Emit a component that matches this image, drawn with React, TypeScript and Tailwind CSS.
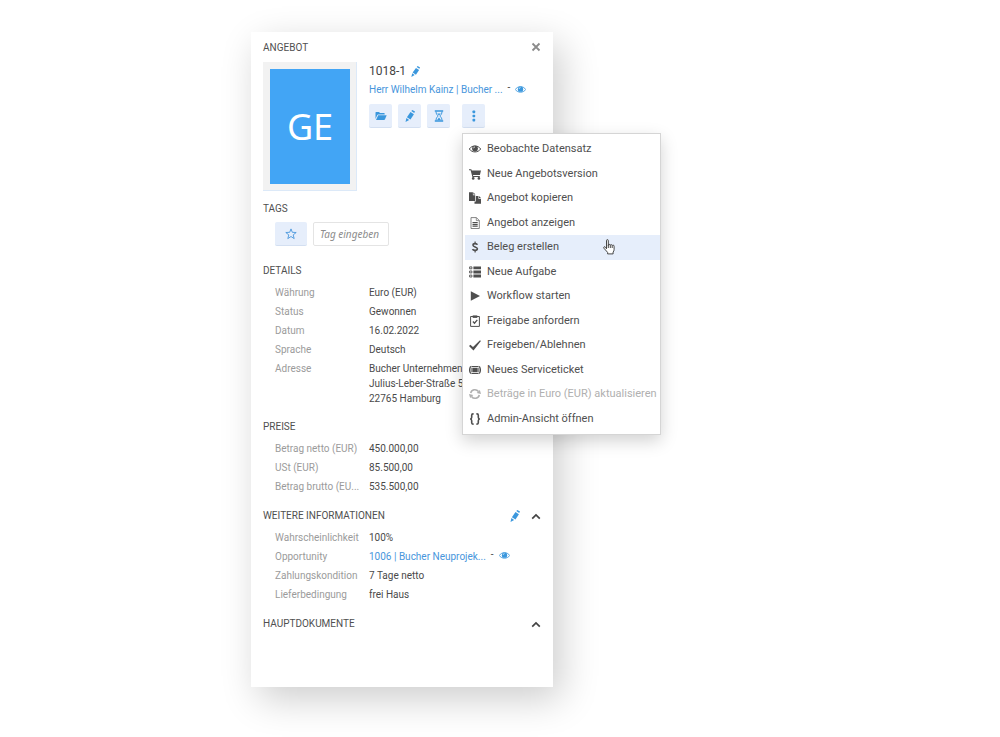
import type { ReactNode } from 'react';

type IconProps = { className?: string };

function Pencil({ className = 'h-3 w-3' }: IconProps) {
  return (
    <svg viewBox="0 0 12 12" className={className} fill="currentColor" aria-hidden="true">
      <path d="M7.300 1.100 8.300 0l2.700 1.600-.8 1.500z" />
      <path d="M6.500 2.100 9.900 4.300 6.500 9.500 2.900 7.200z" />
      <path d="M2.400 8 5.100 9.900 1.500 11.900z" />
    </svg>
  );
}

function Eye({ className = 'h-3 w-3' }: IconProps) {
  return (
    <svg viewBox="0 0 12 12" className={className} aria-hidden="true">
      <path d="M.3 6C3 1.900 9 1.900 11.700 6 9 9.900 3 9.900.3 6z" fill="none" stroke="currentColor" strokeWidth="1" />
      <circle cx="6" cy="5.600" r="2.900" fill="currentColor" />
      <path d="M4.500 5.300A1.500 1.500 0 0 1 6 3.900" fill="none" stroke="#fff" strokeWidth=".7" />
    </svg>
  );
}

function Folder() {
  return (
    <svg viewBox="0 0 12 12" className="h-3 w-3" fill="currentColor" aria-hidden="true">
      <path d="M.5 9V2.600q0-.6.600-.6H4l1 1.100h4q.7 0 .7.700v.8H3.200q-.7 0-1 .6z" />
      <path d="M3.200 5.300h8.500L10 9.300q-.3.700-1 .7H1z" />
    </svg>
  );
}

function Hourglass() {
  return (
    <svg viewBox="0 0 12 12" className="h-3 w-3" fill="none" stroke="currentColor" aria-hidden="true">
      <path d="M1.800 1h8.400M1.800 11h8.400" strokeWidth="1.400" />
      <path d="M3 1.500c0 2.500 1.200 3.500 2.200 4.500-1 1-2.200 2-2.200 4.500M9 1.500c0 2.500-1.200 3.500-2.200 4.500 1 1 2.200 2 2.200 4.500" strokeWidth="1" />
      <path d="M4.200 3.500h3.600L6 5.500zM3.900 10.300 6 7.500l2.100 2.800z" fill="currentColor" stroke="none" />
    </svg>
  );
}

function Dots() {
  return (
    <svg viewBox="0 0 12 12" className="h-3 w-3" fill="currentColor" aria-hidden="true">
      <rect x="4.500" y=".6" width="2.700" height="2.600" rx=".7" />
      <rect x="4.500" y="4.700" width="2.700" height="2.600" rx=".7" />
      <rect x="4.500" y="8.800" width="2.700" height="2.600" rx=".7" />
    </svg>
  );
}

function Star() {
  return (
    <svg viewBox="0 0 12 12" className="h-3 w-3" fill="none" stroke="currentColor" strokeWidth=".9" aria-hidden="true">
      <path d="M6 .9l1.300 3.400 3.900.2-3 2.400 1 3.700L6 8.500l-3.200 2.100 1-3.700-3-2.400 3.900-.2z" />
    </svg>
  );
}

function Close() {
  return (
    <svg viewBox="0 0 10 10" className="h-2.5 w-2.5" stroke="currentColor" strokeWidth="1.800" aria-hidden="true">
      <path d="M1.500 1.500l7 7M8.500 1.500l-7 7" />
    </svg>
  );
}

function ChevronUp() {
  return (
    <svg viewBox="0 0 10 10" className="h-2.5 w-2.5" fill="none" stroke="currentColor" strokeWidth="1.700" aria-hidden="true">
      <path d="M1.200 7.700 5 3.900l3.800 3.800" />
    </svg>
  );
}

function MenuSvg({ children }: { children: ReactNode }) {
  return (
    <svg viewBox="0 0 12 12" className="h-3 w-3 shrink-0" fill="currentColor" aria-hidden="true">
      {children}
    </svg>
  );
}

const cart = (
  <MenuSvg>
    <path d="M0 1.200h2.300l.5 1.300H12L10.900 7H4l.2.900h6.600v1.100H3.400L1.600 2.300H0z" />
    <circle cx="4.200" cy="10.400" r="1.300" />
    <circle cx="9.900" cy="10.400" r="1.300" />
  </MenuSvg>
);
const copy = (
  <MenuSvg>
    <path d="M0 .3h3.900v2.900h2.300V9H0z" />
    <path d="M4.400.3 6.400 2.500h-2z" />
    <path d="M6.900 3.900h2.500v2.900H12v5H5.500V9.600h1.400z" />
    <path d="M9.900 3.900 12 6.100H9.900z" />
  </MenuSvg>
);
const documentIcon = (
  <MenuSvg>
    <path d="M2 .6h5.400l2.900 2.900v8H2z" fill="#fff" stroke="#777" strokeWidth=".9" />
    <path d="M7.300.6v3h3" fill="none" stroke="#777" strokeWidth=".8" />
    <path d="M3.500 5h5.200v1.100H3.500zM3.500 6.800h5.200v1.100H3.500zM3.500 8.600h5.200v1.100H3.500z" />
  </MenuSvg>
);
const dollar = (
  <MenuSvg>
    <path d="M8.400 3.800C7.800 2.300 4 2.100 4 4.200 4 6.100 8.400 5.700 8.400 7.800 8.300 9.900 4.300 9.800 3.500 8.100" fill="none" stroke="currentColor" strokeWidth="1.600" />
    <path d="M5.500.6h1.200v2H5.500zM5.500 9.300h1.200v2.200H5.500z" />
  </MenuSvg>
);
const tasks = (
  <MenuSvg>
    <path d="M4.400.4H12v2.900H4.400zM4.400 4.500H12v2.900H4.400zM4.400 8.600H12v2.900H4.400z" />
    <path d="M.6.9h2.300v1.900H.6zM.6 5h2.300v1.900H.6zM.6 9.100h2.300V11H.6z" fill="none" stroke="currentColor" strokeWidth=".9" />
  </MenuSvg>
);
const play = (
  <MenuSvg>
    <path d="M1.800 1.200 11 6l-9.200 4.800z" />
  </MenuSvg>
);
const clipboard = (
  <MenuSvg>
    <path d="M1.600 1.500h8.800v9.900H1.600z" fill="none" stroke="currentColor" strokeWidth="1" />
    <path d="M3.700.4h4.600v2.500H3.700z" />
    <path d="M3.900 6.500 5.500 8.200 8.300 4.800" fill="none" stroke="currentColor" strokeWidth="1.300" />
  </MenuSvg>
);
const check = (
  <MenuSvg>
    <path d="M0 7.100 1.400 5.700 4 8 11 1.300l.9.800L4.500 11.500z" />
  </MenuSvg>
);
const ticket = (
  <MenuSvg>
    <path d="M2.300 2.400Q.5 2.800.5 6t1.800 3.600M9.700 2.400Q11.500 2.800 11.500 6T9.700 9.600" fill="none" stroke="currentColor" strokeWidth="1.100" />
    <path d="M2.600 1.900h6.800v1.200H2.600zM2.600 8.900h6.800v1.200H2.600zM3.300 3.700h5.400v4.600H3.300zM1.600 3.800h1v4.400h-1zM9.400 3.800h1v4.400h-1z" />
  </MenuSvg>
);
const refresh = (
  <MenuSvg>
    <path d="M1.700 5C2.400 1.400 7.200.4 9.500 3.500M10.300 7C9.600 10.600 4.800 11.600 2.500 8.500" fill="none" stroke="currentColor" strokeWidth="1.500" />
    <path d="M12 5.900 7.700 5.100l3.200-3zM0 6.100l4.300.8-3.200 3z" />
  </MenuSvg>
);
const braces = (
  <MenuSvg>
    <path d="M4.600.9H4q-1.300 0-1.300 1.300v2.100Q2.700 6 1.100 6q1.600 0 1.600 1.700v2.100q0 1.300 1.300 1.300h.6M7.400.9H8q1.300 0 1.300 1.300v2.100Q9.300 6 10.900 6 9.300 6 9.300 7.700v2.100q0 1.300-1.300 1.300h-.6" fill="none" stroke="currentColor" strokeWidth="1.600" />
  </MenuSvg>
);

type MenuEntry = { label: string; icon: ReactNode; active?: boolean; disabled?: boolean };

const menuEntries: MenuEntry[] = [
  { label: 'Beobachte Datensatz', icon: <Eye className="h-3 w-3 shrink-0" /> },
  { label: 'Neue Angebotsversion', icon: cart },
  { label: 'Angebot kopieren', icon: copy },
  { label: 'Angebot anzeigen', icon: documentIcon },
  { label: 'Beleg erstellen', icon: dollar, active: true },
  { label: 'Neue Aufgabe', icon: tasks },
  { label: 'Workflow starten', icon: play },
  { label: 'Freigabe anfordern', icon: clipboard },
  { label: 'Freigeben/Ablehnen', icon: check },
  { label: 'Neues Serviceticket', icon: ticket },
  { label: 'Beträge in Euro (EUR) aktualisieren', icon: refresh, disabled: true },
  { label: 'Admin-Ansicht öffnen', icon: braces },
];

function ActionMenu() {
  return (
    <div role="menu" className="absolute left-0 top-[29px] z-10 grid min-h-[302px] w-[199px] auto-rows-fr border border-[#d5d5d5] bg-white py-[3px] pl-[2px] shadow-[0_6px_16px_rgba(0,0,0,0.18)]">
      {menuEntries.map((entry) => (
        <button
          key={entry.label}
          type="button"
          role="menuitem"
          disabled={entry.disabled}
          className={`relative flex items-center gap-1.5 whitespace-nowrap pl-1 text-left text-[11px] leading-4 ${entry.active ? 'bg-[#e6eefb]' : ''} ${entry.disabled ? 'text-[#b0b0b0]' : 'text-[#4f4f4f]'}`}
        >
          {entry.icon}
          {entry.label}
          {entry.active && <HandCursor />}
        </button>
      ))}
    </div>
  );
}

function HandCursor() {
  return (
    <svg viewBox="0 0 12 16" className="absolute left-[138px] top-1 h-4 w-3" fill="#fff" stroke="#333" strokeWidth=".9" strokeLinejoin="round" aria-hidden="true">
      <path d="M3.500 9.800V1.700q0-1.100.9-1.100t.9 1.100v4.600q.1-.9 1-.9t1 1q.1-.8.900-.8t1 1.100q.2-.6.900-.6 1 0 1 1.200v3.200q0 1.500-1 2.600v1.800H4.600v-1.500L1 9.300q-.6-.8 0-1.400.8-.5 1.500.4z" />
      <path d="M5.300 6v3M7.300 6.500V9M9.200 7v2" fill="none" />
    </svg>
  );
}

function ToolButton({ label, children, expanded }: { label: string; children: ReactNode; expanded?: boolean }) {
  return (
    <button type="button" aria-label={label} aria-expanded={expanded} className="flex h-6 w-[23px] items-center justify-center rounded-[2px] border-b border-[#d3dff1] bg-[#e6eefb] text-[#3a97dd]">
      {children}
    </button>
  );
}

function RecordLink({ children }: { children: string }) {
  return (
    <span className="flex items-center whitespace-nowrap">
      <a href="#record" className="text-[#4896dc]">{children}</a>
      <span className="-mt-1 mx-[5px]">-</span>
      <button type="button" aria-label="Vorschau" className="-mt-0.5 text-[#3a97dd]"><Eye className="h-[11px] w-[11px]" /></button>
    </span>
  );
}

function Heading({ children }: { children: string }) {
  return <h2 className="text-[10px] leading-5 text-[#505050]">{children}</h2>;
}

function Rows({ rows }: { rows: [string, ReactNode][] }) {
  return (
    <dl className="pl-3">
      {rows.map(([label, value]) => (
        <div key={label} className="grid grid-cols-[94px_1fr] py-[2px] leading-[15px]">
          <dt className="whitespace-nowrap text-[#9b9b9b]">{label}</dt>
          <dd className="whitespace-nowrap text-[#4a4a4a]">{value}</dd>
        </div>
      ))}
    </dl>
  );
}

export default function App() {
  return (
    <main className="min-h-screen bg-white px-4 py-8 font-[Roboto,sans-serif] text-[10px] text-[#444]">
      <article className="mx-auto max-w-[302px] bg-white px-3 pb-[53px] shadow-[8px_12px_36px_rgba(0,0,0,0.2)] min-[700px]:ml-[235px]">
        <header className="flex h-[30px] items-center justify-between">
          <h1 className="text-[10px] text-[#505050]">ANGEBOT</h1>
          <button type="button" aria-label="Schließen" className="text-[#8b8b8b]"><Close /></button>
        </header>

        <section className="flex gap-3">
          <div className="border-b border-r border-[#dce9f8] bg-[#f2f2f2] pb-1.5 pl-[7px] pr-1.5 pt-[7px]">
            <div className="flex h-[115px] w-20 items-center justify-center bg-[#42a5f5] font-['Noto_Sans',sans-serif] text-[36px] text-white">GE</div>
          </div>
          <div className="min-w-0">
            <div className="flex h-[18px] items-center gap-1 text-[12px]">
              1018-1
              <button type="button" aria-label="Nummer bearbeiten" className="text-[#3a97dd]"><Pencil className="h-[11px] w-[11px]" /></button>
            </div>
            <div className="h-5 leading-5"><RecordLink>Herr Wilhelm Kainz | Bucher ...</RecordLink></div>
            <div className="mt-1 flex gap-1.5">
              <ToolButton label="Ordner"><Folder /></ToolButton>
              <ToolButton label="Bearbeiten"><Pencil /></ToolButton>
              <ToolButton label="Verlauf"><Hourglass /></ToolButton>
              <div className="relative ml-1.5">
                <ToolButton label="Weitere Aktionen" expanded><Dots /></ToolButton>
                <ActionMenu />
              </div>
            </div>
          </div>
        </section>

        <section className="mt-2">
          <Heading>TAGS</Heading>
          <div className="mt-[3px] flex gap-1.5 pl-3">
            <button type="button" aria-label="Favorit" className="flex h-6 w-8 items-center justify-center rounded-[2px] border-b border-[#d3dff1] bg-[#e6eefb] text-[#4896dc]"><Star /></button>
            <input aria-label="Tag eingeben" placeholder="Tag eingeben" className="h-6 w-[76px] rounded-[2px] border border-[#e4e4e4] px-1.5 font-['Noto_Sans',sans-serif] text-[10px] italic placeholder:text-[#8c8c8c]" />
          </div>
        </section>

        <section className="mt-[15px]">
          <Heading>DETAILS</Heading>
          <div className="mt-[2px]">
            <Rows
              rows={[
                ['Währung', 'Euro (EUR)'],
                ['Status', 'Gewonnen'],
                ['Datum', '16.02.2022'],
                ['Sprache', 'Deutsch'],
                ['Adresse', <>Bucher Unternehmen<br />Julius-Leber-Straße 5<br />22765 Hamburg</>],
              ]}
            />
          </div>
        </section>

        <section className="mt-[9px]">
          <Heading>PREISE</Heading>
          <div className="mt-[2px]">
            <Rows
              rows={[
                ['Betrag netto (EUR)', '450.000,00'],
                ['USt (EUR)', '85.500,00'],
                ['Betrag brutto (EU...', '535.500,00'],
              ]}
            />
          </div>
        </section>

        <section className="mt-[10px]">
          <div className="flex items-center">
            <Heading>WEITERE INFORMATIONEN</Heading>
            <button type="button" aria-label="Informationen bearbeiten" className="ml-auto mr-[10px] text-[#3a97dd]"><Pencil /></button>
            <button type="button" aria-label="Informationen einklappen" className="text-[#444]"><ChevronUp /></button>
          </div>
          <div className="mt-[2px]">
            <Rows
              rows={[
                ['Wahrscheinlichkeit', '100%'],
                ['Opportunity', <RecordLink>1006 | Bucher Neuprojek...</RecordLink>],
                ['Zahlungskondition', '7 Tage netto'],
                ['Lieferbedingung', 'frei Haus'],
              ]}
            />
          </div>
        </section>

        <section className="mt-[10px] flex items-center justify-between">
          <Heading>HAUPTDOKUMENTE</Heading>
          <button type="button" aria-label="Hauptdokumente einklappen" className="text-[#444]"><ChevronUp /></button>
        </section>
      </article>
    </main>
  );
}
